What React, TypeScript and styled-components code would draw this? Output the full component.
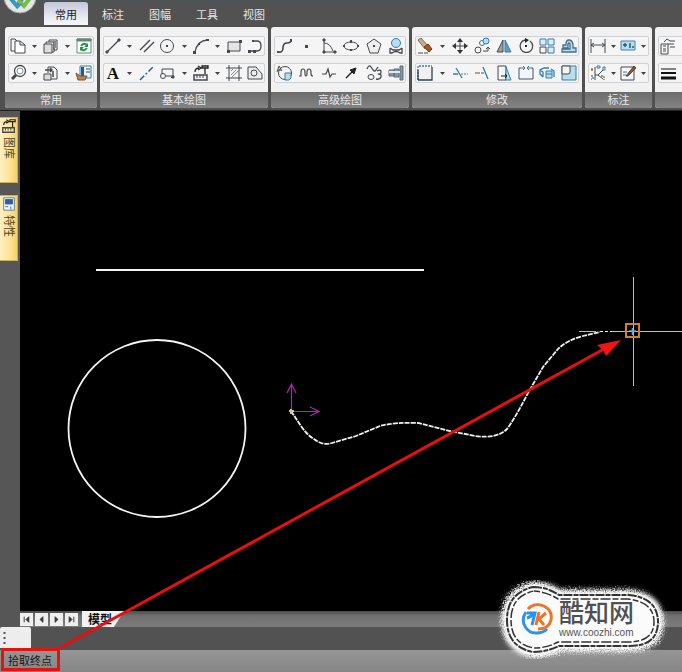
import React from "react";
import styled, { createGlobalStyle } from "styled-components";

const Global = createGlobalStyle`
  * { box-sizing: border-box; }
  html, body { margin: 0; background: #000; }
  body, button { font-family: "Liberation Sans", "Noto Sans CJK SC", sans-serif; }
  button { border: 0; padding: 0; background: none; color: inherit; font-size: 11px; }
`;

const Page = styled.div`
  position: relative;
  display: flex;
  flex-direction: column;
  min-height: 100vh;
  overflow: hidden;
`;

const MenuBar = styled.nav`
  display: flex;
  align-items: flex-end;
  height: 25px;
  background: linear-gradient(#4c5556, #525252 4px, #525252);
`;

const AppButton = styled.button`
  align-self: flex-start;
  width: 38px;
  height: 14px;
  margin-right: 6px;
  svg { display: block; }
`;

const MenuTab = styled.button<{ $active?: boolean }>`
  width: 44px;
  height: 23px;
  margin-right: 3px;
  border-radius: 3px 3px 0 0;
  color: ${(p) => (p.$active ? "#222" : "#e6e6e6")};
  background: ${(p) => (p.$active ? "linear-gradient(#c2c5d6, #e6e8f2 60%, #f6f6f8)" : "none")};
`;

const Ribbon = styled.div`
  display: flex;
  gap: 3px;
  height: 86px;
  padding: 2px 0 2px 5px;
  background: #505050;
  border-bottom: 1px solid #222;
  overflow: hidden;
`;

const Panel = styled.section<{ $width: number }>`
  flex: 0 0 ${(p) => p.$width}px;
  display: flex;
  flex-direction: column;
  border-radius: 3px;
  overflow: hidden;
  background: #f1f1f1;
`;

const PanelBody = styled.div`
  flex: 1;
  display: flex;
  flex-direction: column;
  gap: 7px;
  padding: 9px 3px 0;
`;

const Strip = styled.div`
  display: flex;
  align-items: center;
  justify-content: space-between;
  height: 20px;
  border: 1px solid #cfd1d4;
  border-radius: 2px;
  background: #f5f5f5;
`;

const PanelTitle = styled.h2`
  margin: 0;
  height: 16px;
  font-size: 11px;
  font-weight: 400;
  line-height: 17px;
  text-align: center;
  color: #e8e8e8;
  background: linear-gradient(#6c6c6c, #838383);
`;

const Tool = styled.button`
  flex: 0 0 18px;
  height: 18px;
  svg { display: block; width: 18px; height: 18px; }
`;

const CaretButton = styled.button`
  flex: 0 0 10px;
  height: 18px;
  svg { display: block; margin: auto; }
`;

const Workspace = styled.div`
  flex: 1;
  display: flex;
  min-height: 0;
`;

const Dock = styled.aside`
  flex: 0 0 20px;
  display: flex;
  flex-direction: column;
  gap: 12px;
  padding-top: 6px;
  background: #565656;
`;

const DockTab = styled.button`
  display: flex;
  flex-direction: column;
  align-items: center;
  gap: 3px;
  width: 18px;
  height: 66px;
  border: 1px solid #c9b065;
  border-left: 0;
  background: linear-gradient(90deg, #fdf0c2, #fde49a 55%, #f8cf63);
  svg { flex: 0 0 16px; width: 16px; }
  span { writing-mode: vertical-rl; text-orientation: sideways; line-height: 16px; color: #4d431f; }
`;

const Stage = styled.main`
  flex: 1;
  display: flex;
  flex-direction: column;
  min-width: 0;
  background: #000;
`;

const Drawing = styled.svg`
  flex: 1;
  display: block;
  width: 100%;
  min-height: 0;
`;

const SheetBar = styled.div`
  display: flex;
  align-items: center;
  gap: 2px;
  height: 16px;
  background: linear-gradient(#4c4c4c, #717171 5px, #7b7b7b);
`;

const SheetNav = styled.button`
  width: 13px;
  height: 13px;
  background: #eee;
  svg { display: block; }
`;

const SheetTab = styled.button`
  width: 42px;
  height: 16px;
  margin-left: 2px;
  padding-right: 6px;
  font-size: 12px;
  line-height: 18px;
  font-weight: 700;
  color: #111;
  background: #f2f2f2;
  clip-path: polygon(0 0, 100% 0, 76% 100%, 0 100%);
`;

const CommandRow = styled.div`
  display: flex;
  height: 23px;
  background: #525252;
`;

const Grip = styled.div`
  width: 31px;
  height: 21px;
  border-radius: 2px 2px 0 0;
  background: #ededed;
  svg { display: block; }
`;

const StatusBar = styled.footer`
  height: 22px;
  padding-left: 8px;
  font-size: 11px;
  line-height: 22px;
  color: #181818;
  background: linear-gradient(#959595, #868686);
`;

const Annotation = styled.svg`
  position: absolute;
  inset: 0;
  width: 100%;
  height: 100%;
  pointer-events: none;
`;

const Badge = styled.div`
  position: absolute;
  right: 20px;
  bottom: 16px;
  display: flex;
  align-items: center;
  gap: 5px;
  width: 160px;
  height: 74px;
  padding-left: 19px;
`;

const BadgeFrame = styled.svg`
  position: absolute;
  left: -14px;
  top: -14px;
  width: 190px;
  height: 102px;
`;

const BadgeLogo = styled.svg`
  position: relative;
  flex: 0 0 33px;
  height: 34px;
`;

const BadgeText = styled.div`
  position: relative;
  display: flex;
  flex-direction: column;
  color: #505050;
  white-space: nowrap;
  strong { font-size: 25px; line-height: 28px; font-weight: 500; }
  a { font-size: 10px; line-height: 12px; color: #555; text-decoration: none; }
`;

const dark = "#45484c";
const blue = "#347cae";
const pale = "#b9dcef";

const icons: Record<string, React.ReactNode> = {
  copy: <><path d="M2 14V2h4l2 2M2 14h4" /><path d="M6 4h5l5 4v8H6zM11 4v4h5" fill="#fff" /></>,
  paste: <><path d="M2 7h8v9H2z" fill="#ddd" /><path d="M4 7V5h8v10h-2M7 5V3h8v10h-3M12 5v8" fill="none" /><path d="M8 4h6v7h-2V5H8z" fill="#888" stroke="none" /></>,
  refresh: <><path d="M2 2h14v14H2z" fill="#fff" stroke="#6a8a7a" /><path d="M2 2h14v2H2z" fill="#688573" stroke="#688573" /><path d="M6 9q3-4 6-1M12 11q-3 4-6 1" stroke="#1d9846" strokeWidth="2" /><path d="M13 6v4H9zM5 14v-4h4z" fill="#1d9846" stroke="none" /></>,
  zoom: <><circle cx="11" cy="7" r="5.5" strokeWidth="1.3" fill="#fff" /><circle cx="11" cy="7" r="3" stroke="#7d8d98" /><path d="M7 11l-4 4" strokeWidth="3" /></>,
  insert: <><path d="M6 9V3h6l3 3v9H9" /><path d="M2 10h7v6H2z" fill="#ddd" /><path d="M3 6h7M8 4l2 2-2 2M11 7v6" strokeWidth="1.5" /></>,
  view: <><path d="M5 2h11v12H5z" fill="#e9f3fa" stroke={blue} /><path d="M6 3h3v9H6z" fill="#235b8a" stroke="none" /><path d="M11 5h4M11 8h4" /><path d="M1 9l4 3h7l-2 4H3z" fill="#b98554" stroke="#76502f" /></>,
  line: <><path d="M3 15L15 3" strokeWidth="1.3" /><path d="M2 14h2v2H2zM14 2h2v2h-2z" fill={dark} /></>,
  parallel: <path d="M2 13L12 3M6 15L16 5" strokeWidth="1.4" />,
  circle: <><circle cx="9" cy="9" r="6.5" /><path d="M8 9h2M9 8v2" strokeWidth="2" /></>,
  arc: <><path d="M3 15Q5 4 15 3" strokeWidth="1.3" /><path d="M1 14h3v3H1zM14 2h3v2h-3zM6 6h2v2H6z" fill={dark} stroke="none" /></>,
  rect: <><path d="M3 5h12v9H3z" fill="#e5e5e5" /><path d="M2 13h3v3H2zM14 3h3v3h-3z" fill={dark} stroke="none" /></>,
  polyline: <><path d="M7 4h4q4 0 4 5t-4 5H3" strokeWidth="1.3" /><path d="M2 13h3v3H2zM7 13h3v3H7zM6 3h2v2H6z" fill={dark} stroke="none" /></>,
  text: <text x="9" y="15" textAnchor="middle" fontFamily="Liberation Serif, serif" fontWeight="700" fontSize="17" fill="#111" stroke="none">A</text>,
  centerline: <path d="M2 16L16 2" stroke="#245c99" strokeWidth="1.4" strokeDasharray="6 2 2 2" />,
  contour: <><circle cx="5" cy="12" r="2.5" /><path d="M4 10V5h11v7H8M15 12l-2 2" /><path d="M14 12h2v2h-2z" fill={dark} /></>,
  library: <><path d="M2 11h13v5H2z" strokeWidth="1.5" /><path d="M5 11v3M8 11v3M11 11v3" /><path d="M3 8q0-4 4-4M6 2l3 2-3 2M10 2h6v2h-6zM13 4v6" stroke="#222" strokeWidth="1.3" /></>,
  hatch: <><path d="M4 1v16M14 1v16M1 4h16M1 14h16" /><path d="M6 11l5-5M6 14l8-8M6 7l2-2" stroke="#888" /></>,
  region: <><path d="M2 3h8l6 7v5H2z" fill="#eee" /><circle cx="8" cy="9" r="3" /></>,
  spline: <><path d="M3 15q5 1 5-4t4-5 4-3" strokeWidth="1.6" /><path d="M2 14h2v2H2zM15 2h2v3h-2z" fill={dark} stroke="none" /></>,
  point: <path d="M8 8h3v3H8z" fill={dark} stroke="none" />,
  curve: <><path d="M4 3v12h11M4 6q6 0 9 8" /><path d="M3 2h2v2H3zM3 14h2v2H3zM14 14h2v2h-2z" fill={dark} /></>,
  ellipse: <><ellipse cx="9" cy="9" rx="7" ry="4" fill="#f8f8f8" /><path d="M8 3h2v3H8zM1 8h2v2H1zM15 8h2v2h-2zM8 12h2v2H8z" fill={dark} stroke="none" /></>,
  polygon: <><path d="M9 2l7 5-3 9H5L2 7z" fill="#eee" /><path d="M8 8h2v2H8z" fill={dark} stroke="none" /></>,
  head: <><circle cx="9" cy="6" r="4.5" fill={pale} stroke={blue} /><path d="M3 11v5h2q4-3 8 0h2v-5M3 11l3 2h6l3-2" strokeWidth="1.3" /></>,
  formula: <><circle cx="10" cy="9" r="6.5" /><path d="M2 8l2-6 3 5M3 6h3" /><path d="M10 9h6v5l-2 2h-4z" fill={pale} stroke="#46799a" /></>,
  wave: <path d="M2 12h2V8q0-3 2-3t2 3v2q0 2 1 2t1-2V8q0-3 2-3t2 3v2q0 2 2 2" strokeWidth="1.2" />,
  pulse: <path d="M2 10h4l2-5 2 8 2-3h4" strokeWidth="1.2" />,
  arrow: <><path d="M4 14l8-8" strokeWidth="1.5" stroke="#222" /><path d="M14 4l-2 6-4-4z" fill="#222" stroke="#222" /></>,
  cloud: <><path d="M2 5q2-5 4-2t3 4 4-4M12 7q4-2 4 1t-3 2q4 0 3 3t-5 2" strokeWidth="1.3" /><ellipse cx="6" cy="13" rx="3" ry="2.5" /></>,
  shaft: <><path d="M2 6h5v6H2zM7 5h5v8H7zM13 2h3v14h-3z" fill="#8797a2" stroke="#5c6c78" /><path d="M2 8h11" stroke="#dfeaf0" strokeWidth="2" /></>,
  erase: <><path d="M2 3l3-2 7 8-3 3z" fill="#c5ae8c" stroke="#8a6b49" /><path d="M8 10l4-3 4 5-3 3z" fill="#a65521" stroke="#7a3916" /><path d="M2 16h10" strokeDasharray="5 1" /></>,
  move: <><path d="M9 2v14M2 9h14" /><path d="M9 1l3 4H6zM9 17l3-4H6zM1 9l4-3v6zM17 9l-4-3v6z" fill="#333" stroke="none" /></>,
  duplicate: <><circle cx="5" cy="13" r="3" /><circle cx="9" cy="6" r="2.5" stroke={blue} /><circle cx="13" cy="4" r="3" stroke={blue} fill={pale} /><path d="M10 14h5v-4M13 12l2-2 2 2" /></>,
  mirror: <><path d="M8 3v12H2z" fill="#9ba1a6" /><path d="M10 3v12h6z" fill="#659bbd" stroke={blue} /></>,
  rotate: <><path d="M8 3a6.3 6.3 0 1 0 5 1" strokeWidth="1.3" /><path d="M8 1l4 2-4 3z" fill="#222" stroke="none" /><path d="M8 8h2v2H8z" fill="#222" stroke="none" /></>,
  array: <><path d="M2 10h6v6H2z" /><path d="M2 2h6v6H2zM10 2h6v6h-6zM10 10h6v6h-6z" fill="#dceef8" stroke={blue} /></>,
  offset: <path d="M2 15h14v-4h-3V7q-1-4-4-4T6 7v1H3v3h5V7q1-2 2 0v5H2z" fill={pale} stroke="#476f8b" strokeWidth="1.3" />,
  scale: <><path d="M3 3h12v13H3z" fill="#f0f0f0" stroke="none" /><path d="M2 16V2h14" stroke={blue} strokeWidth="1.3" strokeDasharray="2 1" /><path d="M16 3v13H2M2 6v10" strokeWidth="1.3" stroke="#283f54" /></>,
  trim: <><path d="M2 10h5M5 4l6 10" stroke={blue} strokeWidth="1.3" /><path d="M10 10h7" stroke={blue} strokeDasharray="2 1" /></>,
  extend: <><path d="M2 9h9" stroke="#555" strokeDasharray="5 1" /><path d="M10 3l5 12" stroke={blue} strokeWidth="1.3" /></>,
  stretch: <><path d="M3 2h8v14H3z" /><path d="M11 3l5 13h-5z" fill={pale} stroke={blue} /><path d="M6 12h6M10 10l2 2-2 2" stroke="#222" /></>,
  breakLine: <><path d="M4 4H2v11h14V4h-2" stroke="#39566b" /><path d="M4 4h4M6 2l2 2-2 2M14 4h-4M12 2l-2 2 2 2" stroke={blue} /></>,
  explode: <><path d="M8 7h6v7H8zM8 10h6" fill={pale} stroke={blue} /><path d="M5 13l-3-3V6l4-2h5M5 13V8l-3-2M16 13V7l-3-2" stroke={blue} strokeWidth="1.3" /></>,
  chamfer: <><path d="M2 2h14v14H2z" fill={pale} stroke={blue} /><path d="M2 2h8v6q0 2-2 2H2z" fill="#f5f5f5" stroke={dark} /></>,
  dimension: <path d="M2 2v14M16 2v14M2 8h14M5 6L2 8l3 2M13 6l3 2-3 2" />,
  tolerance: <><path d="M2 4h14v9H2z" fill={pale} stroke="#4c80a4" /><path d="M4 8h4M6 6v4M11 6v5M14 9v2" stroke="#245c85" strokeWidth="1.5" /></>,
  coordinate: <><path d="M6 3v13M6 11h3l5-5M9 11l5 4" /><path d="M2 5h3M3 5v3M2 12h2v3H2M12 12h3v4" strokeDasharray="2 1" /><path d="M8 2h3v2H8zM14 3h2v3h-2z" stroke={blue} /></>,
  note: <><path d="M2 3h13v13H2z" fill="#f9f9f9" /><path d="M4 8h4M4 11h3" stroke={blue} /><path d="M7 12l8-10 2 2-8 8z" fill="#91543b" stroke="#65412f" /></>,
  properties: <><path d="M2 7h7v10H2zM4 9h3M4 12h3M4 14h3" /><path d="M5 5l3-3 3 2h5M9 7h6M11 10h5" /></>,
  weight: <><path d="M2 5h15" stroke="#111" /><path d="M2 9h15" stroke="#111" strokeWidth="2" /><path d="M2 14h15" stroke="#111" strokeWidth="3" /></>,
  display: <><path d="M3 2h12v14H3z" fill="#edf4f8" stroke="#597a91" /><path d="M5 4h8v5H5z" fill="#305f9c" stroke="#305f9c" /><path d="M5 12h3M11 12v3" stroke="#305f9c" /></>,
};

const Icon = ({ name }: { name: string }) => (
  <svg viewBox="0 0 18 18" width="18" height="18" fill="none" stroke={dark} strokeWidth="1" aria-hidden="true">
    {icons[name]}
  </svg>
);

const panels = [
  { title: "常用", width: 92, rows: ["copy v paste v refresh", "zoom v insert v view"] },
  { title: "基本绘图", width: 168, rows: ["line v parallel circle v arc v rect polyline", "text v centerline contour v library v hatch region"] },
  { title: "高级绘图", width: 138, rows: ["spline point curve ellipse polygon head", "formula wave pulse arrow cloud shaft"] },
  { title: "修改", width: 170, rows: ["erase v move duplicate mirror rotate array offset", "scale v trim extend stretch breakLine explode chamfer"] },
  { title: "标注", width: 67, rows: ["dimension v tolerance v", "coordinate v note v"] },
  { title: "", width: 92, rows: ["properties v", "weight v"] },
];

const Row = ({ items }: { items: string }) => (
  <Strip>
    {items.split(" ").map((item, i) =>
      item === "v" ? (
        <CaretButton key={i} aria-label="more">
          <svg width="5" height="3" viewBox="0 0 5 3"><path d="M0 0h5L2.5 3z" fill="#444" /></svg>
        </CaretButton>
      ) : (
        <Tool key={i} aria-label={item}><Icon name={item} /></Tool>
      ),
    )}
  </Strip>
);

const navPaths = ["M4 4v6M9 4v6L6 7z", "M8 4v6L5 7z", "M5 4v6l3-3z", "M4 4v6l3-3zM9 4v6"];
const navNames = ["first", "previous", "next", "last"];

const badgeShape = "M45 19Q59 19 71 27H141Q170 30 170 54T141 78H71Q59 84 45 84Q19 79 19 52T45 19Z";

export default function App() {
  return (
    <Page>
      <Global />
      <MenuBar>
        <AppButton aria-label="menu">
          <svg width="38" height="14" viewBox="0 0 38 14">
            <circle cx="20" cy="-3" r="16" fill="#e4e6e6" stroke="#9da0a0" />
            <path d="M11-1l6 7 5-7" fill="none" stroke="#2f91bd" strokeWidth="4" />
            <path d="M18 0l6 6 6-8" fill="none" stroke="#80b74b" strokeWidth="4" />
            <path d="M13 1l5 6 3-3" fill="none" stroke="#35a2bb" strokeWidth="2" />
          </svg>
        </AppButton>
        {["常用", "标注", "图幅", "工具", "视图"].map((name, i) => (
          <MenuTab key={name} $active={i === 0}>{name}</MenuTab>
        ))}
      </MenuBar>
      <Ribbon>
        {panels.map((panel, i) => (
          <Panel key={i} $width={panel.width}>
            <PanelBody>{panel.rows.map((row) => <Row key={row} items={row} />)}</PanelBody>
            <PanelTitle>{panel.title}</PanelTitle>
          </Panel>
        ))}
      </Ribbon>
      <Workspace>
        <Dock>
          <DockTab><Icon name="library" /><span>图库</span></DockTab>
          <DockTab><Icon name="display" /><span>特性</span></DockTab>
        </Dock>
        <Stage>
          <Drawing viewBox="20 111 662 500" preserveAspectRatio="xMinYMin meet" fill="none">
            <path d="M96 270H424" stroke="#f4f4f4" strokeWidth="2" />
            <circle cx="157" cy="428.5" r="88.5" stroke="#f4f4f4" strokeWidth="1.8" />
            <path d="M291.5 411V385M287 393l4.5-9 4.5 9M292 411.5h27M310 407l9 4.5-9 4.5" stroke="#b520bd" strokeWidth="1.2" />
            <path d="M291 411L301 426Q307 435 314 439Q323 446 332 443L356 436L380 426Q395 422 418 423L450 431L475 436Q497 439 507 429Q514 420 528 393L543 367L558 349Q567 340 583 336L600 332" stroke="#f0f0f0" strokeWidth="1.8" strokeDasharray="5 1" />
            <path d="M600 331.500H632" stroke="#f0f0f0" strokeDasharray="3 2" />
            <path d="M289 411h5M291 409v5" stroke="#d8c47c" strokeWidth="2" />
            <path d="M579 331.5h17M612 331.5h70M633.5 277v109" stroke="#bdbdbd" />
            <path d="M626 324h13v13h-13z" stroke="#cf812e" strokeWidth="2" />
            <path d="M629 331h7M632.5 328v7" stroke="#6aa6df" strokeWidth="1.5" />
          </Drawing>
          <SheetBar>
            {navPaths.map((d, i) => (
              <SheetNav key={d} aria-label={navNames[i]}>
                <svg width="13" height="13" viewBox="0 0 13 14"><path d={d} fill="#333" stroke="#333" /></svg>
              </SheetNav>
            ))}
            <SheetTab>模型</SheetTab>
          </SheetBar>
        </Stage>
      </Workspace>
      <CommandRow>
        <Grip><svg width="10" height="21"><path d="M4.5 5v14" stroke="#555" strokeWidth="2" strokeDasharray="2 3" /></svg></Grip>
      </CommandRow>
      <StatusBar>拾取终点</StatusBar>
      <Annotation viewBox="0 0 682 672" preserveAspectRatio="none" fill="none">
        <path d="M2.5 649.5h56v20h-56z" stroke="#dc1515" strokeWidth="3" />
        <path d="M60 648L604 349" stroke="#e80f0f" strokeWidth="3" />
        <path d="M621 340L597 345L603 350L606 356Z" fill="#f01515" />
      </Annotation>
      <Badge>
        <BadgeFrame viewBox="0 0 190 102" fill="none">
          <defs>
            <filter id="halo" x="-10%" y="-10%" width="120%" height="120%">
              <feGaussianBlur stdDeviation="2" result="soft" />
              <feTurbulence type="fractalNoise" baseFrequency="0.8" numOctaves="2" result="noise" />
              <feDisplacementMap in="soft" in2="noise" scale="9" />
            </filter>
          </defs>
          <path d={badgeShape} fill="#fff" stroke="#fff" strokeWidth="11" filter="url(#halo)" />
          <path d={badgeShape} fill="#fbfbfb" stroke="#333" strokeWidth="2" strokeDasharray="9 1 5 1" />
          <path d="M46 23Q59 24 70 31H140Q166 34 166 54T140 74H70Q59 80 46 80Q23 76 23 52T46 23Z" stroke="#333" strokeWidth="1.5" strokeDasharray="6 2 10 2" />
        </BadgeFrame>
        <BadgeLogo viewBox="0 0 33 34" fill="none">
          <path d="M5 10C-2 20 6 32 16 31Q22 31 26 27" stroke="#2c91ea" strokeWidth="3" />
          <path d="M7 7C17-3 33 6 30 18Q28 27 17 27" stroke="#ec7529" strokeWidth="3" />
          <path d="M6 11h8l-3 12M13 11q-3 4-7 5" stroke="#2c91ea" strokeWidth="3" />
          <path d="M18 10l-3 13M25 11l-7 6 5 6" stroke="#ec7529" strokeWidth="3" />
        </BadgeLogo>
        <BadgeText><strong>酷知网</strong><a href="#home">www.coozhi.com</a></BadgeText>
      </Badge>
    </Page>
  );
}
